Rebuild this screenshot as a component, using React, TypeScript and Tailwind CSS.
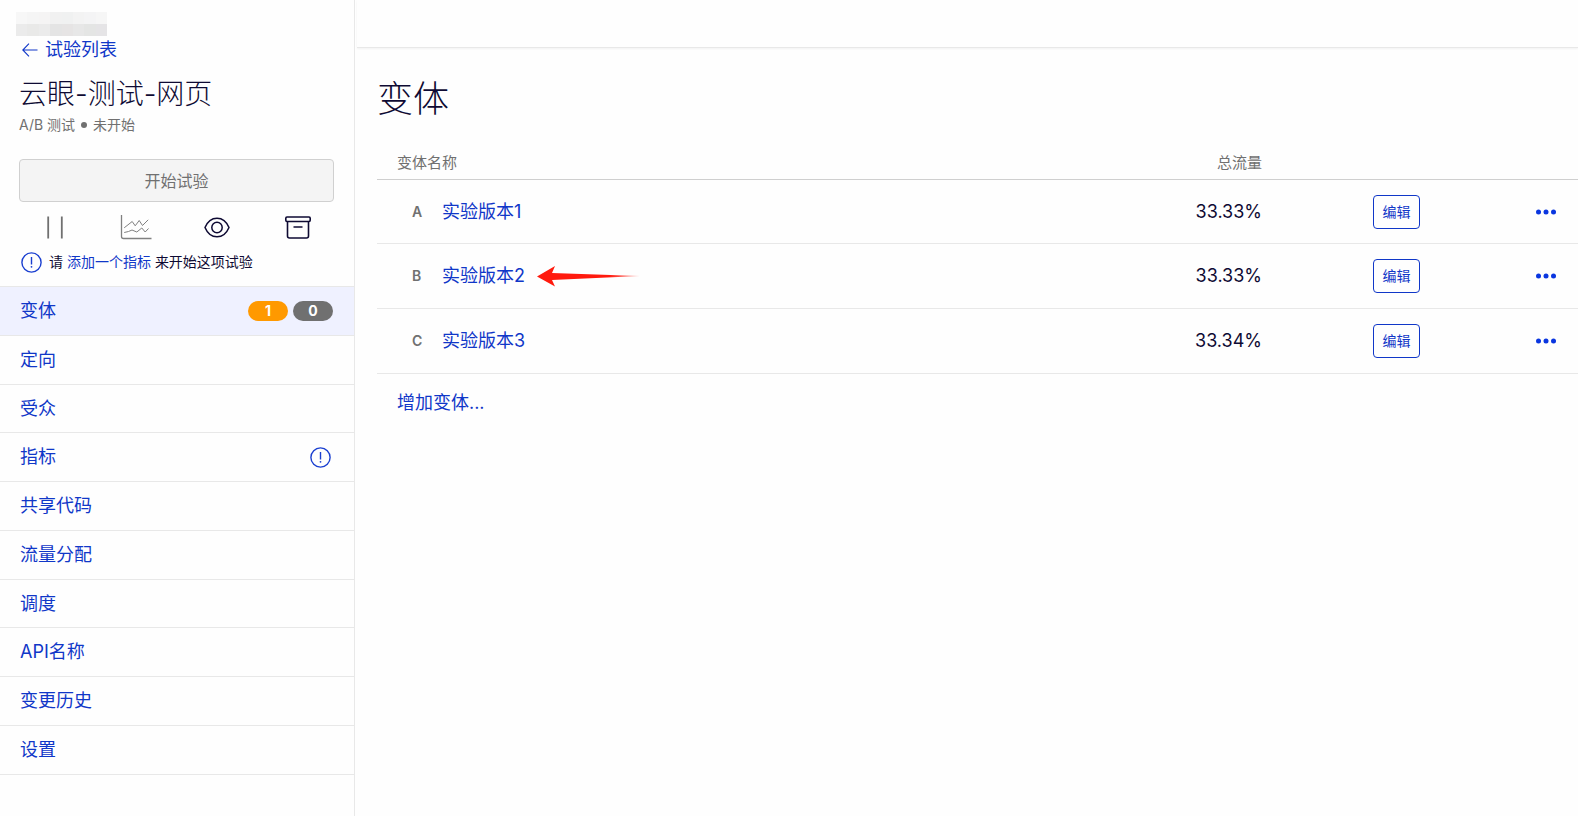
const navItems = [
    { label: '变体', active: true, badges: true },
    { label: '定向' },
    { label: '受众' },
    { label: '指标', alert: true },
    { label: '共享代码' },
    { label: '流量分配' },
    { label: '调度' },
    { label: 'API名称' },
    { label: '变更历史' },
    { label: '设置' },
];

const variations = [
    { letter: 'A', name: '实验版本1', traffic: '33.33%' },
    { letter: 'B', name: '实验版本2', traffic: '33.33%', marked: true },
    { letter: 'C', name: '实验版本3', traffic: '33.34%' },
];

// 打码的账户名色块
const maskTop = ['#f7f7f7', '#f5f5f5', '#f5f4f4', '#f1f1f1', '#f0f1f1', '#f3f3f3', '#f4f4f5', '#f6f6f6'];
const maskBottom = ['#ebebeb', '#e9e9e8', '#ebebeb', '#e4e4e4', '#e6e4e4', '#e7e7e7', '#e4e5e4', '#e5e4e6'];

function AlertIcon() {
    return (
        <svg className="w-[21px] h-[21px] shrink-0" viewBox="0 0 21 21" fill="none" stroke="#1a3fd0" aria-hidden="true">
            <circle cx="10.5" cy="10.5" r="9.6" strokeWidth="1.4" />
            <path d="M10.5 5v7.5" strokeWidth="1.4" />
            <circle cx="10.5" cy="14.8" r="0.9" fill="#1a3fd0" stroke="none" />
        </svg>
    );
}

function PauseIcon() {
    return (
        <svg className="w-4 h-[23px]" viewBox="0 0 16 23" stroke="#707070" strokeWidth="1.8" aria-hidden="true">
            <path d="M1.2 0.5v22M14.8 0.5v22" />
        </svg>
    );
}

function ChartIcon() {
    return (
        <svg className="w-8 h-[25px]" viewBox="0 0 32 25" fill="none" stroke="#808080" aria-hidden="true">
            <path d="M1.5 0v21.5q0 2 2 2H31.5" strokeWidth="1.3" />
            <path d="M4.2 12.8l8-6.3 3 4.3 4-5.3 3.3 5 5.7-5.7" strokeWidth="1" />
            <path d="M4.2 17.5l4.3-1 3.5-1.5 4.8 2 5-4 3.4 4 3.3-3.5" strokeWidth="1" />
        </svg>
    );
}

function EyeIcon() {
    return (
        <svg className="w-[26px] h-[21px]" viewBox="0 0 26 21" fill="none" stroke="#0e0a33" strokeWidth="1.5" aria-hidden="true">
            <path d="M1 10.5C3.5 4.5 8 1.2 13 1.2s9.5 3.3 12 9.3c-2.5 6-7 9.3-12 9.3S3.5 16.5 1 10.5z" />
            <circle cx="13" cy="10.5" r="5.2" />
        </svg>
    );
}

function ArchiveIcon() {
    return (
        <svg className="w-[26px] h-[23px]" viewBox="0 0 26 23" fill="none" stroke="#0e0a33" strokeWidth="1.6" aria-hidden="true">
            <rect x="0.8" y="1" width="24.4" height="4.5" rx="1.2" />
            <path d="M2.5 5.5v14.5q0 2 2 2h17q2 0 2-2V5.5M8.5 11h9" />
        </svg>
    );
}

function Sidebar() {
    return (
        <aside className="w-[355px] shrink-0 border-r border-[#e8e8e8]">
            <div className="pl-[19px] pr-5 pt-3">
                <div className="w-[91px] -ml-[3px]" aria-hidden="true">
                    <div className="flex h-3">
                        {maskTop.map((color, i) => <span key={i} className="flex-1" style={{ background: color }} />)}
                    </div>
                    <div className="flex h-3">
                        {maskBottom.map((color, i) => <span key={i} className="flex-1" style={{ background: color }} />)}
                    </div>
                </div>
                <a href="#experiments" className="flex items-center gap-[7px] pl-[3px] text-lg leading-7 text-[#1037c8]">
                    <svg className="w-4 h-[14px]" viewBox="0 0 16 14" fill="none" stroke="currentColor" strokeWidth="1.1" aria-hidden="true">
                        <path d="M15.5 7H1M7 0.7L0.8 7 7 13.3" />
                    </svg>
                    试验列表
                </a>
                <h2 className="mt-3 text-[28px] leading-9 font-light text-[#0e0a33]">云眼-测试-网页</h2>
                <p className="mt-[2px] text-sm leading-[22px] text-[#707070] flex items-center">
                    A/B 测试
                    <span className="mx-[6px] size-[6px] rounded-full bg-[#707070]" />
                    未开始
                </p>
                <button disabled className="mt-[23px] w-full h-[43px] rounded border border-[#d0d0d0] bg-[#f4f4f4] text-base text-[#707070]">
                    开始试验
                </button>
                <div className="mt-[11px] grid grid-cols-4 h-7 -mx-1">
                    <button className="flex items-center justify-center" aria-label="暂停"><PauseIcon /></button>
                    <button className="flex items-center justify-center" aria-label="结果"><ChartIcon /></button>
                    <button className="flex items-center justify-center" aria-label="预览"><EyeIcon /></button>
                    <button className="flex items-center justify-center" aria-label="归档"><ArchiveIcon /></button>
                </div>
                <div className="mt-[6px] pl-[2px] flex items-center h-[30px] text-sm text-[#0e0a33]">
                    <AlertIcon />
                    <p className="ml-[7px]">请 <a href="#metrics" className="text-[#1037c8]">添加一个指标</a> 来开始这项试验</p>
                </div>
            </div>
            <nav className="mt-[9px] border-t border-[#e8e8e8]">
                {navItems.map((item) => (
                    <a
                        key={item.label}
                        href="#nav"
                        className={`flex items-center justify-between pl-5 pr-[21px] pt-3 pb-[11px] text-lg leading-snug text-[#1037c8] border-b border-[#e8e8e8] ${item.active ? 'bg-[#eff1ff]' : ''}`}
                    >
                        {item.label}
                        {item.badges && (
                            <span className="flex gap-[5px] text-sm leading-5 font-bold text-white text-center">
                                <span className="w-10 rounded-full bg-[#ff9900]">1</span>
                                <span className="w-10 rounded-full bg-[#707070]">0</span>
                            </span>
                        )}
                        {item.alert && <span className="pr-[2px]"><AlertIcon /></span>}
                    </a>
                ))}
            </nav>
        </aside>
    );
}

function VariationTable() {
    return (
        <table className="mt-[30px] w-full border-collapse">
            <thead>
                <tr className="border-b border-[#cfcfcf] text-[15px] leading-6 text-[#707070]">
                    <th className="pl-5 pb-1 text-left font-normal">变体名称</th>
                    <th className="w-40 pb-1 text-right font-normal">总流量</th>
                    <th className="w-[158px]" />
                    <th className="w-[158px]" />
                </tr>
            </thead>
            <tbody>
                {variations.map((row) => (
                    <tr key={row.letter} className="h-[65px] first:h-16 border-b border-[#e8e8e8]">
                        <td className="pl-[35px]">
                            <div className="flex items-center">
                                <span className="w-[30px] text-sm font-semibold text-[#707070]">{row.letter}</span>
                                <a href="#variation" className="text-lg text-[#1037c8]">{row.name}</a>
                                {row.marked && (
                                    <svg className="ml-3 w-[104px] h-[22px]" viewBox="0 0 104 22" aria-hidden="true">
                                        <defs>
                                            <linearGradient id="arrow" x1="0" x2="1">
                                                <stop offset="0.7" stopColor="#ff1a0e" />
                                                <stop offset="1" stopColor="#ff1a0e" stopOpacity="0.3" />
                                            </linearGradient>
                                        </defs>
                                        <path d="M0 11.5L18 1l-3 7L103 11 15 15l3 6.5z" fill="url(#arrow)" />
                                    </svg>
                                )}
                            </div>
                        </td>
                        <td className="text-right text-lg text-[#0e0a33]">{row.traffic}</td>
                        <td className="text-right">
                            <button className="w-[47px] h-[34px] rounded border border-[#1037c8] text-sm text-[#1037c8]">编辑</button>
                        </td>
                        <td className="pr-[22px]">
                            <button aria-label="更多" className="block ml-auto">
                                <svg className="w-5 h-[6px]" viewBox="0 0 20 6" fill="#0a36e0" aria-hidden="true">
                                    <circle cx="2.5" cy="3" r="2.5" />
                                    <circle cx="10" cy="3" r="2.5" />
                                    <circle cx="17.5" cy="3" r="2.5" />
                                </svg>
                            </button>
                        </td>
                    </tr>
                ))}
            </tbody>
        </table>
    );
}

export default function App() {
    return (
        <div className="flex min-h-screen bg-[#fefefe] font-[Inter,'Noto_Sans_CJK_SC',sans-serif]">
            <Sidebar />
            <div className="flex-1 min-w-0 pl-[2px]">
                <header className="h-12 border-b border-[#e8e8e8] shadow-xs" />
                <main className="pl-5 pt-[29px]">
                    <h1 className="text-4xl leading-[44px] font-light text-[#0e0a33]">变体</h1>
                    <VariationTable />
                    <a href="#add" className="mt-[15px] ml-5 inline-block text-lg text-[#1037c8]">增加变体...</a>
                </main>
            </div>
        </div>
    );
}
